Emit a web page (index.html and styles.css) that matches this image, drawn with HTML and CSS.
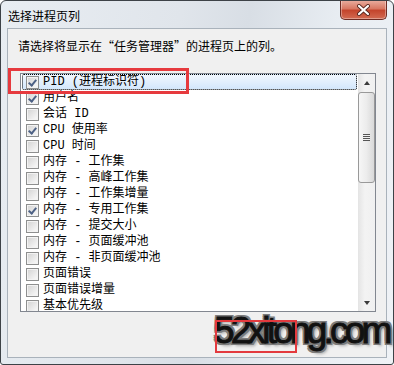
FILE: index.html
```html
<!DOCTYPE html>
<html>
<head>
  <title>选择进程页列</title>
  <meta charset="utf-8">
  <link rel="stylesheet" href="styles.css">
</head>
<body>
  <div class="window">
    <div class="titlebar">
      <span class="title">选择进程页列</span>
      <div class="close">
        <svg width="15" height="12" viewBox="0 0 15 12"><path d="M3 2 L12 10 M12 2 L3 10" stroke="#5a2a22" stroke-width="4" stroke-linecap="round"/><path d="M3 2 L12 10 M12 2 L3 10" stroke="#fff" stroke-width="2.2" stroke-linecap="round"/></svg>
      </div>
    </div>
    <div class="client">
      <p class="prompt">请选择将显示在“任务管理器”的进程页上的列。</p>
      <div class="listbox">
        <ul class="items">
          <li class="item selected"><span class="check on"></span>PID (进程标识符)</li>
          <li class="item"><span class="check on"></span>用户名</li>
          <li class="item"><span class="check"></span>会话 ID</li>
          <li class="item"><span class="check on"></span>CPU 使用率</li>
          <li class="item"><span class="check"></span>CPU 时间</li>
          <li class="item"><span class="check"></span>内存 - 工作集</li>
          <li class="item"><span class="check"></span>内存 - 高峰工作集</li>
          <li class="item"><span class="check"></span>内存 - 工作集增量</li>
          <li class="item"><span class="check on"></span>内存 - 专用工作集</li>
          <li class="item"><span class="check"></span>内存 - 提交大小</li>
          <li class="item"><span class="check"></span>内存 - 页面缓冲池</li>
          <li class="item"><span class="check"></span>内存 - 非页面缓冲池</li>
          <li class="item"><span class="check"></span>页面错误</li>
          <li class="item"><span class="check"></span>页面错误增量</li>
          <li class="item"><span class="check"></span>基本优先级</li>
        </ul>
        <div class="scrollbar">
          <div class="sb-btn"><span class="arrow up"></span></div>
          <div class="sb-thumb"><span class="grip"></span></div>
          <div class="sb-btn down"><span class="arrow dn"></span></div>
        </div>
      </div>
    </div>
    <div class="mark-box"></div>
    <div class="watermark">52xitong.com</div>
    <div class="wm-box"></div>
  </div>
</body>
</html>
```
FILE: styles.css
```css
body { margin: 0; background: #fff; font-family: "Noto Sans CJK SC", sans-serif; font-size: 12px; color: #000; }
.window {
  position: relative;
  width: 394px; height: 365px;
  box-sizing: border-box;
  border: 1px solid #3d4247;
  border-radius: 6px 6px 3px 3px;
  padding: 0 6px 6px;
  display: flex; flex-direction: column;
  overflow: hidden;
  background: linear-gradient(100deg, #e8edf2 0%, #e0e5eb 40%, #d8dee5 55%, #e8edf2 75%, #eff2f6 100%);
}
.titlebar { height: 27px; display: flex; justify-content: space-between; align-items: flex-start; }
.title { margin: 7px 0 0 1px; line-height: 16px; }
.close {
  width: 47px; height: 20px; margin-top: -1px;
  box-sizing: border-box;
  border: 1px solid #6e2c24; border-top: none;
  border-radius: 0 0 5px 5px;
  background: linear-gradient(#eab0a2, #d87863 45%, #c4452d 55%, #d36b52);
  display: flex; align-items: center; justify-content: center;
  box-shadow: inset 0 0 0 1px rgba(255,255,255,0.35);
}
.client {
  flex: 1;
  border: 1px solid #a9b2bb;
  background: #f0f0f0;
  padding: 9px 10px 0 10px;
}
.prompt { margin: 0; line-height: 16px; }
.listbox {
  margin: 19px 0 0 2px;
  width: 356px; height: 239px;
  box-sizing: border-box;
  border: 1px solid #828790;
  background: #fff;
  display: flex;
}
.items { flex: 1; list-style: none; margin: 0; padding: 0 1px; overflow: hidden; }
.item {
  height: 16px; box-sizing: border-box;
  display: flex; align-items: center; gap: 4px;
  padding-left: 4px;
  font-family: "Liberation Mono", "Noto Sans CJK SC", monospace;
  line-height: 16px; white-space: nowrap;
}
.item.selected {
  border: 1px dotted #000; border-radius: 2px;
  padding-left: 3px;
  background: linear-gradient(#f1f7fe, #d3e7fc);
}
.check {
  width: 13px; height: 13px; flex: none;
  box-sizing: border-box;
  border: 1px solid #8e8f8f;
  background: linear-gradient(135deg, #d2d2d2, #f4f4f4 80%);
  box-shadow: inset 0 0 0 1px #f3f3f3;
  position: relative;
}
.check.on::after {
  content: "";
  position: absolute; left: 3px; top: 1px;
  width: 3px; height: 6px;
  border: solid #4d6185; border-width: 0 2px 2px 0;
  transform: rotate(40deg);
}
.scrollbar {
  width: 17px; flex: none;
  display: flex; flex-direction: column;
  background: linear-gradient(to right, #e4e4e4, #f3f3f3 40%, #f0f0f0);
}
.sb-btn { height: 17px; display: flex; align-items: center; justify-content: center; }
.sb-btn.down { margin-top: auto; }
.arrow { width: 0; height: 0; border-left: 3.5px solid transparent; border-right: 3.5px solid transparent; }
.arrow.up { border-bottom: 4px solid #3b3b3b; }
.arrow.dn { border-top: 4px solid #3b3b3b; }
.sb-thumb {
  height: 91px; margin-top: 1px;
  box-sizing: border-box;
  border: 1px solid #999;
  border-radius: 3px;
  background: linear-gradient(to right, #f6f6f6, #ececec 50%, #d9d9d9);
  display: flex; align-items: center; justify-content: center;
}
.grip {
  width: 7px; height: 7px;
  background: repeating-linear-gradient(#555 0 1px, #f0f0f0 1px 2px);
}
.mark-box {
  position: absolute; left: 7px; top: 67px;
  width: 181px; height: 26px;
  box-sizing: border-box;
  border: 3px solid #e63a3e;
}
.watermark {
  position: absolute; left: 213px; top: 309px;
  font-family: "Liberation Sans", sans-serif;
  font-size: 37px; letter-spacing: -3.8px;
  color: #111;
  -webkit-text-stroke: 1px #111;
  text-shadow: 2px 0 #7c7c7c, -2px 0 #7c7c7c, 0 2px #7c7c7c, 0 -2px #7c7c7c, 2px 2px #7c7c7c, -2px -2px #7c7c7c, 2px -2px #7c7c7c, -2px 2px #7c7c7c, 3px 3px 3px #a8a8a8;
}
.wm-box {
  position: absolute; left: 214px; top: 319px;
  width: 82px; height: 33px;
  box-sizing: border-box;
  border: 2px solid #e33a3e;
}
```
